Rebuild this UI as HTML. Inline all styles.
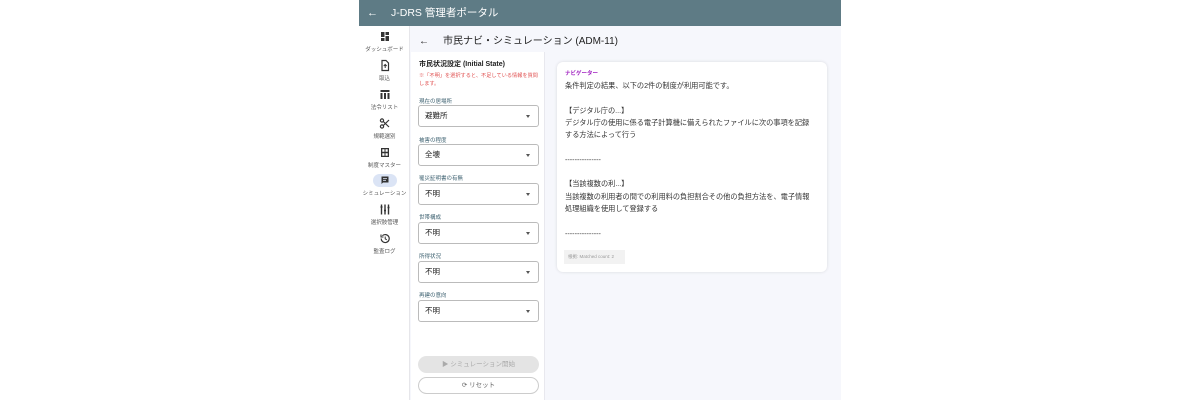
<!DOCTYPE html>
<html><head><meta charset="utf-8"><style>
*{box-sizing:border-box;margin:0;padding:0}
body{width:1200px;height:400px;background:#fff;font-family:"Liberation Sans","Noto Sans CJK JP",sans-serif;position:relative;overflow:hidden;color:#333}
.app{position:absolute;left:359px;top:0;width:482px;height:400px;background:#f6f7fc;overflow:hidden}
.hdr{position:absolute;left:0;top:0;width:482px;height:26px;background:#5e7b85;color:#fff;font-size:10.5px;line-height:26px}
.hdr .ar{position:absolute;left:8px;font-size:11px}
.hdr .t{position:absolute;left:32px}
.side{position:absolute;left:0;top:26px;width:51px;height:374px;background:#fff;border-right:1px solid #e6e6ea}
.it{position:absolute;left:0;width:51px;text-align:center;font-size:5.5px;color:#555}
.it svg{display:block;margin:0 auto 2px;width:24px;height:13px}
.it.on svg{background:#dbe4f5;border-radius:7px}
.ttl{position:absolute;left:60px;top:32px;font-size:10px;color:#222}
.left{position:absolute;left:52px;top:52px;width:134px;height:348px;background:#fff;border-right:1px solid #e8e8ee}
.h{position:absolute;left:8px;top:7px;font-size:7px;font-weight:bold;color:#222}
.warn{position:absolute;left:8px;top:20px;font-size:5.2px;color:#e05050;line-height:8px;width:122px}
.lb{position:absolute;left:8px;font-size:5.5px;color:#3d6170}
.sel{position:absolute;left:7px;width:121px;height:22px;border:1px solid #bbb;border-radius:3px;font-size:7.5px;line-height:20px;padding-left:6px;color:#222}
.sel:after{content:"";position:absolute;right:8px;top:9px;border:2.5px solid transparent;border-top:3px solid #555}
.b1{position:absolute;left:7px;top:304px;width:121px;height:17px;border-radius:9px;background:#e4e4e4;color:#aaa;font-size:6.5px;text-align:center;line-height:17px}
.b2{position:absolute;left:7px;top:325px;width:121px;height:17px;border-radius:9px;border:1px solid #ccc;background:#fff;color:#666;font-size:6.5px;text-align:center;line-height:15px}
.card{position:absolute;left:198px;top:62px;width:270px;height:210px;background:#fff;border-radius:6px;box-shadow:0 0 3px rgba(0,0,0,.12)}
.nv{position:absolute;left:8px;top:7px;font-size:5.5px;color:#a020c0;font-weight:bold}
.tx{position:absolute;left:8px;top:18px;width:248px;font-size:7.2px;line-height:12.3px;color:#333}
.mc{position:absolute;left:7px;top:188px;width:61px;height:14px;background:#f2f2f2;font-size:4.5px;color:#999;line-height:14px;padding-left:4px}
</style></head><body>
<div class="app">
<div class="hdr"><span class="ar">←</span><span class="t">J-DRS 管理者ポータル</span></div>
<div class="side">
<div class="it" style="top:4px"><svg viewBox="0 0 24 13"><path d="M8 2h3.5v5H8zM12.5 2H16v3h-3.5zM8 8h3.5v3H8zM12.5 6H16v5h-3.5z" fill="#333"/></svg>ダッシュボード</div>
<div class="it" style="top:33px"><svg viewBox="0 0 24 13"><path d="M9 1.5h4l2.5 2.5v7.5H9z" fill="none" stroke="#333" stroke-width="1.2"/><path d="M12.2 9V5.5M10.7 7l1.5-1.5 1.5 1.5" fill="none" stroke="#333" stroke-width="1"/></svg>取込</div>
<div class="it" style="top:62px"><svg viewBox="0 0 24 13"><path d="M7.5 2h9v2h-9zM7.5 5h2v6h-2zM11 5h2v6h-2zM14.5 5h2v6h-2z" fill="#333"/></svg>法令リスト</div>
<div class="it" style="top:91px"><svg viewBox="0 0 24 13"><circle cx="9" cy="3.5" r="1.6" fill="none" stroke="#333" stroke-width="1.2"/><circle cx="9" cy="9.5" r="1.6" fill="none" stroke="#333" stroke-width="1.2"/><path d="M10.3 4.5L16 10M10.3 8.5L16 3" stroke="#333" stroke-width="1.2"/></svg>規範選別</div>
<div class="it" style="top:120px"><svg viewBox="0 0 24 13"><path d="M8 2h8v9H8z" fill="#333"/><path d="M9.3 3.3h2.2v2.5H9.3zM12.5 3.3h2.2v2.5h-2.2zM9.3 7.2h2.2v2.5H9.3zM12.5 7.2h2.2v2.5h-2.2z" fill="#fff"/></svg>制度マスター</div>
<div class="it on" style="top:148px"><svg viewBox="0 0 24 13"><path d="M8.5 2.5h7v6h-5.5l-1.5 1.5z" fill="#333"/><path d="M10 4.5h4M10 6.3h3" stroke="#dbe4f5" stroke-width=".8"/></svg>シミュレーション</div>
<div class="it" style="top:177px"><svg viewBox="0 0 24 13"><path d="M8.5 1.5v10M12 1.5v10M15.5 1.5v10M7.5 4h2M11 7.5h2M14.5 4.5h2" stroke="#333" stroke-width="1.4"/></svg>選択肢管理</div>
<div class="it" style="top:206px"><svg viewBox="0 0 24 13"><path d="M8.2 6.5a4 4 0 1 0 1.2-2.8" fill="none" stroke="#333" stroke-width="1.2"/><path d="M8 2.5v2.5h2.5" fill="none" stroke="#333" stroke-width="1.1"/><path d="M12.2 4.5v2.3l1.6 1" fill="none" stroke="#333" stroke-width="1"/></svg>監査ログ</div>
</div>
<div class="ttl"><span style="margin-right:14px">←</span>市民ナビ・シミュレーション (ADM-11)</div>
<div class="left">
<div class="h">市民状況設定 (Initial State)</div>
<div class="warn">※「不明」を選択すると、不足している情報を質問します。</div>
<div class="lb" style="top:45px">現在の居場所</div><div class="sel" style="top:53px">避難所</div>
<div class="lb" style="top:84px">被害の程度</div><div class="sel" style="top:92px">全壊</div>
<div class="lb" style="top:122px">罹災証明書の有無</div><div class="sel" style="top:131px">不明</div>
<div class="lb" style="top:161px">世帯構成</div><div class="sel" style="top:170px">不明</div>
<div class="lb" style="top:200px">所得状況</div><div class="sel" style="top:209px">不明</div>
<div class="lb" style="top:239px">再建の意向</div><div class="sel" style="top:248px">不明</div>
<div class="b1">▶ シミュレーション開始</div>
<div class="b2">⟳ リセット</div>
</div>
<div class="card">
<div class="nv">ナビゲーター</div>
<div class="tx">条件判定の結果、以下の2件の制度が利用可能です。<br><br>【デジタル庁の...】<br>デジタル庁の使用に係る電子計算機に備えられたファイルに次の事項を記録<br>する方法によって行う<br><br>---------------<br><br>【当該複数の利...】<br>当該複数の利用者の間での利用料の負担割合その他の負担方法を、電子情報<br>処理組織を使用して登録する<br><br>---------------</div>
<div class="mc">根拠: Matched count: 2</div>
</div>
</div>
</body></html>
